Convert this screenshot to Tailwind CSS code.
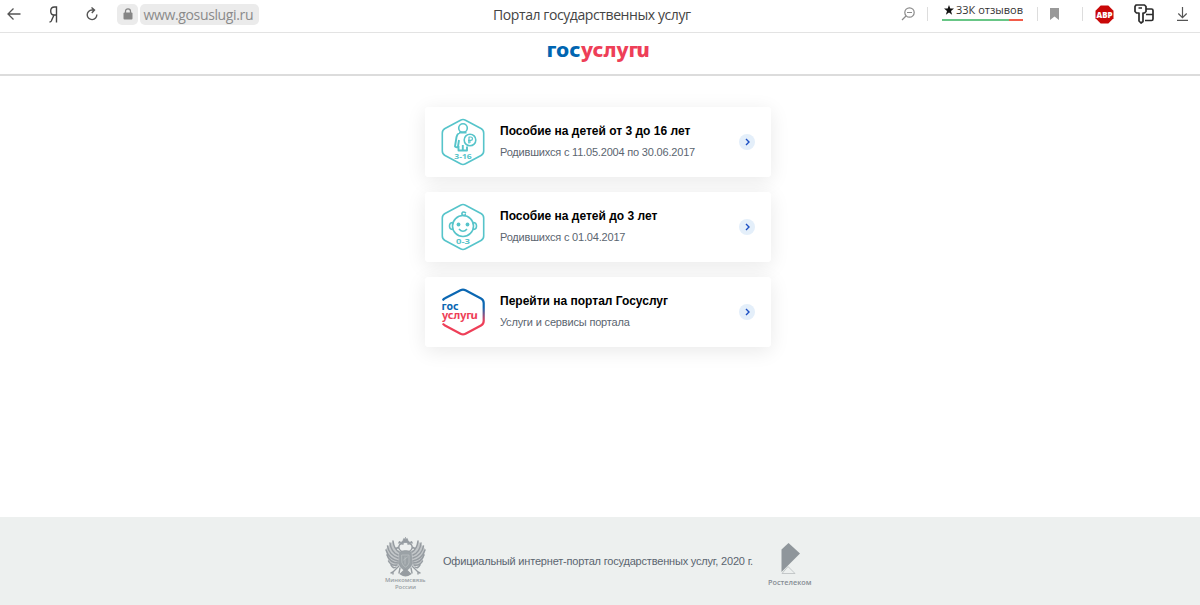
<!DOCTYPE html>
<html lang="ru">
<head>
  <meta charset="UTF-8">
  <meta name="viewport" content="width=device-width, initial-scale=1.0">
  <title>Портал государственных услуг</title>
  <script src="https://cdn.jsdelivr.net/npm/@tailwindcss/browser@4"></script>
</head>
<body class="bg-white font-['Liberation_Sans',Arial,sans-serif] overflow-hidden">
  <div class="h-[605px] flex flex-col">

    <!-- Browser bar -->
    <div class="h-[33px] shrink-0 border-b border-[#e3e3e3] flex items-center pb-1 font-['Open_Sans',sans-serif] text-[#444]">
      <div class="w-[493px] flex items-center">
        <svg class="ml-[7px] w-[14px] h-[14px]" viewBox="0 0 14 14" fill="none" stroke="#555" stroke-width="1.3"><path d="M13.5 7H1M6.5 1.5L1 7l5.500 5.500"/></svg>
        <svg class="ml-[28px] w-[9px] h-[17px]" viewBox="0 0 9 17" fill="none" stroke="#444" stroke-width="1.4"><path d="M7.500 16.500V1H5.500C3 1 1.700 2.600 1.700 5s1.300 4 3.300 4h2.500M5 9L2.300 15q-.5 1-1.800 1"/></svg>
        <svg class="ml-[28px] w-[12px] h-[14px]" viewBox="0 0 12 14" fill="none" stroke="#555" stroke-width="1.400"><path d="M10.800 7.500A4.800 4.800 0 1 1 6 3h2.500M5.500 .5L8.500 3 5.800 6"/></svg>
        <div class="ml-[19px] w-[21px] h-[21px] rounded-[5px] bg-[#ebebeb] flex items-center justify-center">
          <svg class="w-[10px] h-[12px]" viewBox="0 0 10 12"><path d="M2.500 5V3.300a2.500 2.500 0 0 1 5 0V5" fill="none" stroke="#858585" stroke-width="1.300"/><rect x=".5" y="4.500" width="9" height="7" rx="1" fill="#858585"/></svg>
        </div>
        <div class="ml-[2px] w-[119px] h-[21px] rounded-[5px] bg-[#ebebeb] text-[#8a8a8a] text-[14px] leading-[21px] pl-[3.500px] whitespace-nowrap tracking-[-0.36px]">www.gosuslugi.ru</div>
      </div>
      <div class="w-[408px] pt-px text-[14px] leading-5 tracking-[-0.41px] whitespace-nowrap"><span>Портал государственных услуг</span></div>
      <svg class="w-[14px] h-[14px]" viewBox="0 0 14 14" fill="none" stroke="#8b8b8b" stroke-width="1.200"><circle cx="8.500" cy="5.500" r="4.700"/><path d="M5 9L1 13M6 5.500h5"/></svg>
      <div class="ml-[12px] w-px h-[14px] bg-[#ddd]"></div>
      <div class="ml-[14px] w-[81px] flex flex-col pb-[6px]">
        <div class="h-[16px] flex items-center pl-[2px] gap-[2px] text-[11px] leading-4 text-[#333] whitespace-nowrap">
          <svg class="w-[10px] h-[10px] shrink-0" viewBox="0 0 10 10"><path d="M5 0l1.300 3.600H10L7 5.900 8.100 9.700 5 7.500 1.900 9.700 3 5.900 0 3.600h3.700z" fill="#111"/></svg>
          <span>33К отзывов</span>
        </div>
        <div class="h-[2px] mt-px flex"><div class="w-[67px] bg-[#68c686]"></div><div class="w-[14px] bg-[#f25c4a]"></div></div>
      </div>
      <div class="ml-[14px] w-px h-[14px] bg-[#ddd]"></div>
      <svg class="ml-[12px] w-[9px] h-[12px]" viewBox="0 0 9 12"><path d="M0 0h9v12L4.500 8.500 0 12z" fill="#999"/></svg>
      <div class="ml-[23px] w-px h-[14px] bg-[#ddd]"></div>
      <svg class="ml-[12px] w-[19px] h-[19px]" viewBox="0 0 19 19"><path d="M5.700.5h7.600l5.200 5.200v7.600l-5.200 5.200H5.700L.5 13.300V5.700z" fill="#c90808"/><text x="1.500" y="12.700" textLength="16" lengthAdjust="spacingAndGlyphs" font-family="Open Sans" font-size="9" font-weight="800" fill="#fff">ABP</text></svg>
      <svg class="ml-[20px] w-[20px] h-[20px]" viewBox="0 0 20 20" fill="none" stroke="#2b2b2b" stroke-width="1.700" stroke-linejoin="round"><path d="M11 5h6.500q1.500 0 1.500 1.500V15q0 1.500-1.500 1.500H11M12 10.500h7"/><path d="M2 1h8.500L12 2.500v5L10.500 9H9v8.500L7 19l-2-2V9H2.500L1 7.500V2.500z" fill="#fff"/><path d="M4.500 4h3.500" stroke-width="1.500"/></svg>
      <svg class="ml-[23px] w-[11px] h-[14px]" viewBox="0 0 11 14" fill="none" stroke="#555" stroke-width="1.200"><path d="M5.500 0v10.500M1.300 6.500l4.200 4.200 4.200-4.200M0 13.300h11"/></svg>
    </div>

    <!-- Header -->
    <header class="h-[43px] shrink-0 border-b-2 border-[#dcdcdc] flex justify-center pr-[3px]">
      <svg class="w-[104px] h-[32px]" viewBox="546 33 104 32" font-family="Noto Sans" font-weight="800" font-size="20">
        <text x="545.500" y="57.300" textLength="34" lengthAdjust="spacingAndGlyphs" fill="#0065b1">гос</text>
        <text x="580" y="57.300" textLength="57" lengthAdjust="spacingAndGlyphs" fill="#ee3f58">услуг</text>
        <text transform="translate(636.500 57.300) skewX(12)" font-style="italic" textLength="13.500" lengthAdjust="spacingAndGlyphs" fill="#ee3f58">и</text>
      </svg>
    </header>

    <main class="grow flex flex-col items-center gap-4 pt-[31px] pr-1">
      <a class="w-[346px] h-[69.500px] -mb-[0.500px] rounded-[3px] bg-white shadow-[0_4px_20px_rgba(0,0,0,0.09)] flex items-center">
        <svg class="ml-[14.500px] w-[46px] h-[48px]" viewBox="0 0 46 48" fill="none" stroke="#56c4ca" stroke-width="1.600" stroke-linejoin="round">
          <path d="M20.500 2.200q2.500-1.300 5 0L41 10.500q2.700 1.500 2.700 4.500v18q0 3-2.700 4.500L25.500 45.800q-2.500 1.300-5 0L5 37.500Q2.300 36 2.300 33V15q0-3 2.700-4.500z"/>
          <circle cx="23" cy="10" r="4.300"/>
          <path d="M20 14.500q-3 1.500-3.500 4.500L15 28.500q2 1.500 3 0l1-6.500M18.500 28v4.500h8.500V28.500M22.800 27v5.500M19 14.500h7.500" stroke-width="1.900"/>
          <circle cx="30" cy="22" r="5.800" fill="#fff"/>
          <path d="M29 25.500V19h1.700q1.800 0 1.800 1.700t-1.800 1.700H28M28 24h3" stroke-width="1.200"/>
          <text x="14.300" y="40.700" textLength="17.500" lengthAdjust="spacingAndGlyphs" font-family="Open Sans" font-weight="700" font-size="7.200" fill="#56c4ca" stroke="none">3-16</text>
        </svg>
        <div class="ml-[14.500px] w-[239px] whitespace-nowrap">
          <div class="text-[12px] leading-[18px] font-bold text-black"><span>Пособие на детей от 3 до 16 лет</span></div>
          <div class="mt-[3px] mb-px text-[11px] leading-[18px] text-[#5b6570] tracking-[-0.19px]"><span>Родившихся с 11.05.2004 по 30.06.2017</span></div>
        </div>
        <svg class="w-4 h-4" viewBox="0 0 16 16" fill="none"><circle cx="8" cy="8" r="8" fill="#e4effa"/><path d="M7 5l3 3-3 3" stroke="#1c4fc4" stroke-width="1.400"/></svg>
      </a>

      <a class="w-[346px] h-[69.500px] -mb-[0.500px] rounded-[3px] bg-white shadow-[0_4px_20px_rgba(0,0,0,0.09)] flex items-center">
        <svg class="ml-[14.500px] w-[46px] h-[48px]" viewBox="0 0 46 48" fill="none" stroke="#56c4ca" stroke-width="1.600" stroke-linejoin="round">
          <path d="M20.500 2.200q2.500-1.300 5 0L41 10.500q2.700 1.500 2.700 4.500v18q0 3-2.700 4.500L25.500 45.800q-2.500 1.300-5 0L5 37.500Q2.300 36 2.300 33V15q0-3 2.700-4.500z"/>
          <circle cx="23" cy="23" r="10.500"/>
          <path d="M13 19.500q-3.500 0-3.500 3.500t3.500 3.500M33 19.500q3.500 0 3.500 3.500t-3.500 3.500M26 10q-3-2-4 0-.5 2 1.500 2.500 2 0 1.800-1.700"/>
          <path d="M19 26q4 4.500 8 0"/>
          <circle cx="18.500" cy="21.500" r="1.900" fill="#56c4ca" stroke="none"/><circle cx="27.500" cy="21.500" r="1.900" fill="#56c4ca" stroke="none"/>
          <text x="16" y="41.300" textLength="14" lengthAdjust="spacingAndGlyphs" font-family="Open Sans" font-weight="700" font-size="7.500" fill="#56c4ca" stroke="none">0-3</text>
        </svg>
        <div class="ml-[14.500px] w-[239px] whitespace-nowrap">
          <div class="text-[12px] leading-[18px] font-bold text-black"><span>Пособие на детей до 3 лет</span></div>
          <div class="mt-[3px] mb-px text-[11px] leading-[18px] text-[#5b6570] tracking-[-0.19px]"><span>Родившихся с 01.04.2017</span></div>
        </div>
        <svg class="w-4 h-4" viewBox="0 0 16 16" fill="none"><circle cx="8" cy="8" r="8" fill="#e4effa"/><path d="M7 5l3 3-3 3" stroke="#1c4fc4" stroke-width="1.400"/></svg>
      </a>

      <a class="w-[346px] h-[69.500px] rounded-[3px] bg-white shadow-[0_4px_20px_rgba(0,0,0,0.09)] flex items-center">
        <svg class="ml-[14.500px] w-[46px] h-[48px]" viewBox="0 0 46 48" font-family="Noto Sans" font-weight="700" font-size="10.500">
          <defs>
            <linearGradient id="hex" x1="0" y1="0" x2="0" y2="48" gradientUnits="userSpaceOnUse">
              <stop offset=".4" stop-color="#0b67b2"/><stop offset=".7" stop-color="#ee3f58"/>
            </linearGradient>
          </defs>
          <path d="M2.800 12.500Q3.500 11 5 10.300L20.500 2.200q2.500-1.300 5 0L41 10.500q2.700 1.500 2.700 4.500v18q0 3-2.700 4.500L25.500 45.800q-2.500 1.300-5 0L5 37.500Q3.500 36.700 2.800 35.500" fill="none" stroke="url(#hex)" stroke-width="2.200"/>
          <text x="1.500" y="22.300" textLength="17" lengthAdjust="spacingAndGlyphs" fill="#0b67b2">гос</text>
          <text x="2" y="31" textLength="29.500" lengthAdjust="spacingAndGlyphs" fill="#ee3f58">услуг</text>
          <text transform="translate(31 31) skewX(12)" font-style="italic" textLength="7.500" lengthAdjust="spacingAndGlyphs" fill="#ee3f58">и</text>
        </svg>
        <div class="ml-[14.500px] w-[239px] whitespace-nowrap">
          <div class="text-[12px] leading-[18px] font-bold text-black"><span>Перейти на портал Госуслуг</span></div>
          <div class="mt-[3px] mb-px text-[11px] leading-[18px] text-[#5b6570] tracking-[-0.17px]"><span>Услуги и сервисы портала</span></div>
        </div>
        <svg class="w-4 h-4" viewBox="0 0 16 16" fill="none"><circle cx="8" cy="8" r="8" fill="#e4effa"/><path d="M7 5l3 3-3 3" stroke="#1c4fc4" stroke-width="1.400"/></svg>
      </a>
    </main>

    <footer class="h-[88px] shrink-0 bg-[#edf0ef] flex items-center">
      <svg class="ml-[384px] w-[44px] h-[56px] mt-[8px]" viewBox="0 0 44 56" fill="none" stroke="#969ca1" stroke-width="1.400" stroke-linecap="round">
        <!-- wings -->
        <g id="wing">
          <path d="M9 4Q10 12 16 14v14l-8 2-5-10-1-8 2-3z" fill="#c3c7c9" stroke="none"/>
          <path d="M15 15Q10 12 9 4M14 18Q7 15 6 6M14 21Q5 18 3.500 9M14 24Q5 22 2 13M14 26Q6 26 3 18M13 28Q7 29 4.500 24M12 30Q9 32 7 28" stroke-width="1.500"/>
          <path d="M19 15Q14 13 15 9q1-3 4-2M15 10l-3 1.500M15 29l-6 6-2 1M9 35v2M16 31l-1 5"/>
          <path d="M14.500 6l1-2 1.500 1.500L18.500 4l1 2z" fill="#969ca1" stroke-width=".6"/>
        </g>
        <use href="#wing" transform="matrix(-1 0 0 1 43 0)"/>
        <path d="M19 3.500l.8-2 1.700 1 1.700-1 .8 2v2h-5zM21.500 0v2" fill="#969ca1" stroke-width=".8"/>
        <path d="M16 15q5.500-3 11 0l1 12q-2 5-6.500 7-4.500-2-6.500-7z" fill="#9ba2a6" stroke-width=".8"/>
        <path d="M18 18h7v8q-1 3-3.500 4-2.500-1-3.500-4zM19.500 23l4-3M21 20v7" stroke="#bfc4c6" stroke-width=".7"/>
        <path d="M21.500 32l-5 5q5 3.500 10 0z" fill="#969ca1"/>
        <g fill="#989ea3" stroke="none" font-family="Open Sans" font-size="6" font-weight="600">
          <text x="1" y="45" textLength="40.500" lengthAdjust="spacingAndGlyphs">Минкомсвязь</text>
          <text x="11" y="52" textLength="21" lengthAdjust="spacingAndGlyphs">России</text>
        </g>
      </svg>
      <div class="ml-[15px] w-[324px] text-[11px] leading-4 text-[#5b6570] tracking-[-0.19px] whitespace-nowrap"><span>Официальный интернет-портал государственных услуг, 2020 г.</span></div>
      <svg class="w-[46px] h-[48px] mt-[6px]" viewBox="0 0 46 48">
        <path d="M14.500 9.500L21.500 3 33 13.500 14.500 32z" fill="#8f969b"/>
        <path d="M21 26.500l7 7H15z" fill="none" stroke="#b9bebf" stroke-width=".8"/>
        <text x="1" y="45" textLength="43.500" lengthAdjust="spacingAndGlyphs" font-family="Open Sans" font-size="7" font-weight="600" fill="#858c93">Ростелеком</text>
      </svg>
    </footer>
  </div>
</body>
</html>
